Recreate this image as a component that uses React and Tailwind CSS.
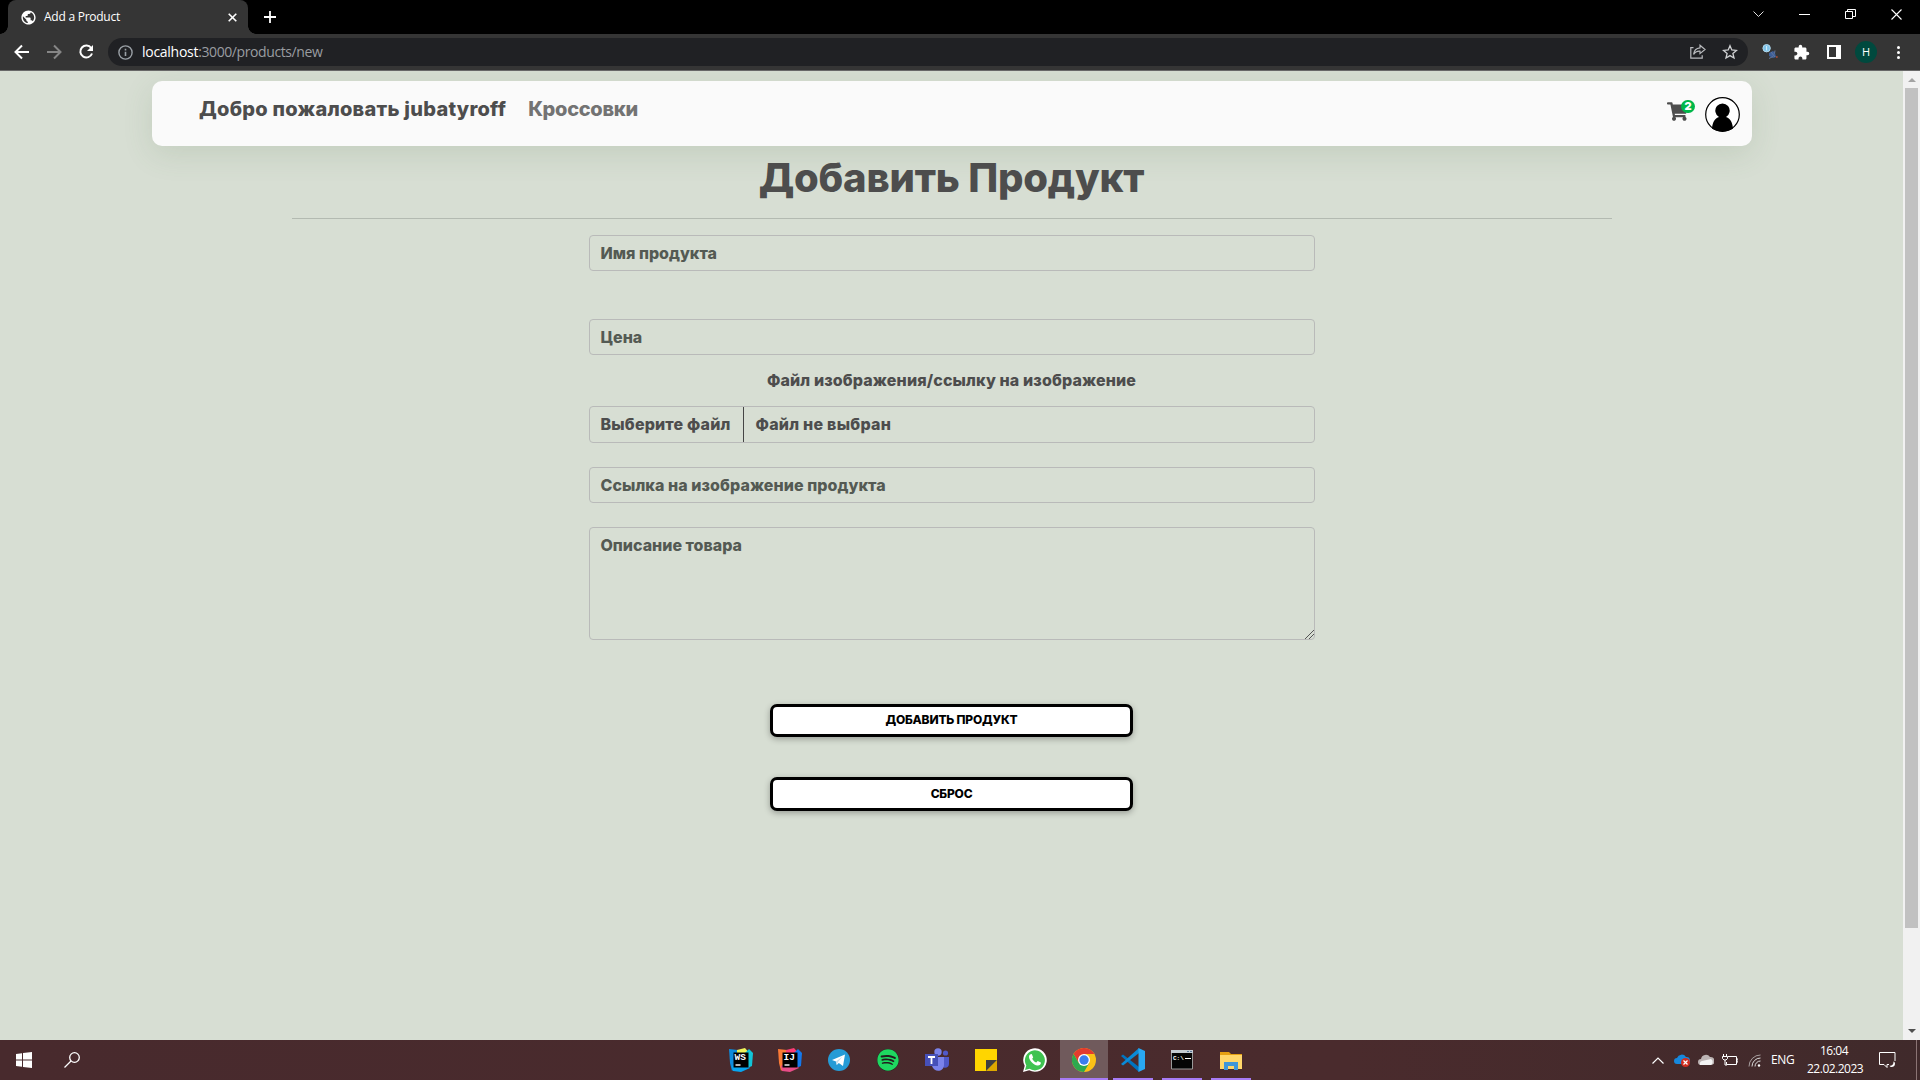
import React from 'react';
import { FaShoppingCart, FaSpotify } from 'react-icons/fa';
import { MdExtension, MdPublic } from 'react-icons/md';

function Tab() {
  return (
    <div className="relative ml-2 flex h-[34px] w-[240px] items-center rounded-t-lg bg-[#353535] pl-3">
      <span className="absolute -left-2 bottom-0 h-2 w-2 bg-[radial-gradient(circle_at_0_0,#000_7.5px,#353535_8px)]" />
      <span className="absolute -right-2 bottom-0 h-2 w-2 bg-[radial-gradient(circle_at_100%_0,#000_7.5px,#353535_8px)]" />
      <MdPublic className="h-[17px] w-[17px] text-white" />
      <span className="ml-[7px] text-[12px] tracking-[-0.25px] text-white">Add a Product</span>
      <svg className="absolute right-[11px] top-[13px] h-[9px] w-[9px]" viewBox="0 0 9 9" fill="none" stroke="#fff" strokeWidth="1.6">
        <path d="M.7.7l7.6 7.6M8.3.7L.7 8.3" />
      </svg>
    </div>
  );
}

function TitleBar() {
  return (
    <div className="flex h-[34px] justify-between bg-black">
      <div className="flex">
        <Tab />
        <svg className="ml-4 mt-[11px] h-3 w-3" viewBox="0 0 12 12" stroke="#fff" strokeWidth="1.8">
          <path d="M6 0v12M0 6h12" />
        </svg>
      </div>
      <div className="flex gap-[35px] pr-[18px] pt-[9px]">
        <svg className="h-[11px] w-[11px]" viewBox="0 0 11 11" fill="none" stroke="#ddd" strokeWidth="1">
          <path d="M.5 2.5l5 5 5-5" />
        </svg>
        <svg className="h-[11px] w-[11px]" viewBox="0 0 11 11" stroke="#fff">
          <path d="M0 5.500h11" />
        </svg>
        <svg className="h-[11px] w-[11px]" viewBox="0 0 11 11" fill="none" stroke="#fff">
          <path d="M.5 2.500h7v7h-7zM2.500 2.500v-2h8v7h-3" />
        </svg>
        <svg className="h-[11px] w-[11px]" viewBox="0 0 11 11" stroke="#fff" strokeWidth="1.1">
          <path d="M.5.5l10 10M10.500.5l-10 10" />
        </svg>
      </div>
    </div>
  );
}

function Toolbar() {
  return (
    <div className="flex h-[37px] items-center border-b border-[#686868] bg-[#353535]">
      <svg className="ml-[14px] h-4 w-4" viewBox="0 0 16 16" fill="none" stroke="#fff" strokeWidth="2">
        <path d="M15 8H2M8 1.5L1.5 8 8 14.5" />
      </svg>
      <svg className="ml-4 h-4 w-4" viewBox="0 0 16 16" fill="none" stroke="#868686" strokeWidth="2">
        <path d="M1 8h13M8 1.5L14.5 8 8 14.5" />
      </svg>
      <svg className="ml-4 h-4 w-4" viewBox="0 0 16 16" fill="none" stroke="#fff" strokeWidth="2">
        <path d="M13.2 4A6 6 0 1 0 14 9.5" />
        <path d="M15 1v6H9z" fill="#fff" stroke="none" />
      </svg>
      <div className="ml-[14px] flex h-7 w-[1640px] items-center rounded-full bg-[#202124] pl-[10px] pr-[10px]">
        <svg className="h-[15px] w-[15px]" viewBox="0 0 15 15" fill="none" stroke="#9aa0a6" strokeWidth="1.4">
          <circle cx="7.5" cy="7.5" r="6.6" />
          <path d="M7.5 6.7v4.3M7.5 3.8v1.6" strokeWidth="1.6" />
        </svg>
        <span className="ml-[9px] text-[14px] leading-5 tracking-[-0.4px] text-[#9a9da1]">
          <span className="tracking-[-0.28px] text-white">localhost</span>:3000/products/new
        </span>
        <svg className="ml-auto h-4 w-4" viewBox="0 0 16 16" fill="none" stroke="#b9bbbe" strokeWidth="1.2">
          <path d="M3.5 3.6H.8v10.6h11.4v-3M10 1.3L15 5.5 10 9.6V7.2C7 7 5 8 3.6 10.4 4 6.500 6.500 4.200 10 3.900z" />
        </svg>
        <svg className="ml-4 h-4 w-4" viewBox="0 0 16 16" fill="none" stroke="#d0d2d4" strokeWidth="1.3">
          <path d="M8 1.700l1.800 4.300 4.700.4-3.600 3 1.100 4.600L8 11.600 4 14l1.100-4.600-3.600-3 4.700-.4z" />
        </svg>
      </div>
      <svg className="ml-[14px] h-4 w-4" viewBox="0 0 16 16">
        <path d="M7 9l4-2 2 2 1 4-3 1-4-2z" fill="#3d5f99" />
        <path d="M7 14.500l4-2M13 6.500l-.5 3M9 8l4 5" stroke="#64779b" />
        <circle cx="4.600" cy="4.200" r="3.700" fill="#7fc4ea" stroke="#b4d9ec" />
        <path d="M4.600 2v4.500" stroke="#d8effa" />
        <circle cx="14.800" cy="13" r="1" fill="#a24b36" />
      </svg>
      <MdExtension className="ml-[15px] h-[17px] w-[17px] text-white" />
      <div className="ml-[17px] h-[14px] w-[14px] border-2 border-r-[5px] border-white" />
      <div className="ml-[14px] flex h-[22px] w-[22px] items-center justify-center rounded-full bg-[#00493e] text-[11px] text-white">H</div>
      <div className="ml-5 flex flex-col gap-[2px]">
        <i className="h-[3px] w-[3px] rounded-full bg-white" />
        <i className="h-[3px] w-[3px] rounded-full bg-white" />
        <i className="h-[3px] w-[3px] rounded-full bg-white" />
      </div>
    </div>
  );
}

function SiteNav() {
  return (
    <nav className="ml-[152px] mt-[10px] flex h-[65px] w-[1600px] rounded-[10px] bg-[#fafafa] pl-[47px] pr-3 shadow-[0_8px_30px_rgba(80,110,70,0.14)]">
      <span className="mt-[13px] whitespace-nowrap text-[20px] leading-[30px] tracking-[0.25px] text-[#4d4d4d]">Добро пожаловать jubatyroff</span>
      <span className="ml-[22px] mt-[13px] whitespace-nowrap text-[20px] leading-[30px] tracking-[-0.3px] text-[#737373]">Кроссовки</span>
      <div className="relative ml-auto mt-[21px] h-5 w-7">
        <FaShoppingCart className="h-[19px] w-[21px] text-[#4d4d4d]" />
        <span className="absolute -top-[2px] left-[14px] flex h-[13px] w-[14px] items-center justify-center rounded-full bg-[#00b74a] text-[11px] font-black leading-none text-white">2</span>
      </div>
      <svg className="ml-[10px] mt-4 h-[35px] w-[35px]" viewBox="0 0 35 35">
        <circle cx="17.500" cy="17.500" r="16.800" fill="#fff" stroke="#000" strokeWidth="1.2" />
        <path d="M7 31.500c.5-7 3.500-10.500 7-11.500a7.200 7.200 0 1 1 7 0c3.500 1 6.500 4.500 7 11.500-6 4-15 4-21 0z" />
      </svg>
    </nav>
  );
}

const field = 'flex w-[726px] rounded-[4px] border border-[#b9bab9] px-[11px] text-[16px] leading-[35px] text-[#545a53]';
const button = 'flex w-[363px] items-center justify-center rounded-[7px] border-[3px] border-black bg-white text-[12px] leading-none tracking-[-0.2px] text-black shadow-[0_2px_6px_rgba(0,0,0,0.3)]';

function ProductForm() {
  return (
    <main className="flex w-[1903px] flex-col items-center">
      <h1 className="mt-2 h-12 whitespace-nowrap text-[40px] leading-[48px] tracking-[-0.2px] text-[#4d4d4d]">Добавить Продукт</h1>
      <hr className="mt-4 w-[1320px] border-0 border-t border-[#b3bab1]" />
      <div className={field + ' mt-4 h-9'}><span>Имя продукта</span></div>
      <div className={field + ' mt-12 h-9'}><span>Цена</span></div>
      <p className="mt-[13px] h-6 text-[16px] leading-[25px] tracking-[0.13px] text-[#4d4d4d]">Файл изображения/ссылку на изображение</p>
      <div className={field + ' mt-[14px] h-[37px]'}>
        <span className="w-[143px] border-r border-[#454545] tracking-[0.17px] text-[#4d4d4d]">Выберите файл</span>
        <span className="ml-3 tracking-[0.25px] text-[#4d4d4d]">Файл не выбран</span>
      </div>
      <div className={field + ' mt-6 h-9'}><span className="leading-[34px] tracking-[0.06px]">Ссылка на изображение продукта</span></div>
      <div className={field + ' relative mt-6 h-[113px]'}>
        <span>Описание товара</span>
        <svg className="absolute bottom-0 right-0 h-[9px] w-[9px]" viewBox="0 0 9 9" stroke="#555">
          <path d="M0 9l9-9M4 9l5-5" />
        </svg>
      </div>
      <div className={button + ' mt-16 h-[33px] pb-px'}><span>ДОБАВИТЬ ПРОДУКТ</span></div>
      <div className={button + ' mt-10 h-[34px]'}><span>СБРОС</span></div>
    </main>
  );
}

function Scrollbar() {
  return (
    <div className="flex w-[17px] flex-col items-center bg-[#f1f1f1]">
      <i className="mt-[7px] h-0 w-0 border-x-4 border-b-4 border-x-transparent border-b-[#a3a3a3]" />
      <div className="mt-[6px] h-[840px] w-[13px] bg-[#c1c1c1]" />
      <i className="mb-[7px] mt-auto h-0 w-0 border-x-4 border-t-4 border-x-transparent border-t-[#505050]" />
    </div>
  );
}

function JetBrains({ label, colors }) {
  const [a, b, c, d] = colors;
  return (
    <svg className="h-6 w-6" viewBox="0 0 24 24">
      <path d="M0 1l9 1 4 11-10 10-2-8z" fill={a} />
      <path d="M8 2l8-2 5 6-8 9-5-4z" fill={b} />
      <path d="M14 7l6-6 4 4-1 13-9 4z" fill={c} />
      <path d="M3 18l9-6 9 8-9 4-8-1z" fill={d} />
      <path d="M4.500 4.500h15v15h-15z" />
      <text x="5.500" y="12" fontSize="9.500" fontWeight="700" fontFamily="Liberation Mono" fill="#fff">{label}</text>
      <path d="M6.500 17h5" stroke="#fff" strokeWidth="1.400" />
    </svg>
  );
}

function Telegram() {
  return (
    <svg className="h-[22px] w-[22px]" viewBox="0 0 22 22">
      <circle cx="11" cy="11" r="11" fill="#259bd6" />
      <path d="M4 11L17 5.500 15 17l-4.200-3-2 2-.8-3.500z" fill="#fff" />
      <path d="M8 12.500l6.500-5-4.700 5.800-1 2.700z" fill="#c4dcea" />
    </svg>
  );
}

function Spotify() {
  return (
    <div className="h-[22px] w-[22px] rounded-full bg-[#221d1e]">
      <FaSpotify className="h-[22px] w-[22px] text-[#1ed760]" />
    </div>
  );
}

function Teams() {
  return (
    <svg className="h-6 w-6" viewBox="0 0 24 24">
      <circle cx="20.500" cy="5" r="2.600" fill="#5059c9" />
      <path d="M16 9h8v7c0 4-5 5-7 2z" fill="#5059c9" />
      <circle cx="13" cy="4" r="3.700" fill="#7b83eb" />
      <path d="M7 9h12v8c0 7-10 8-12 1z" fill="#7b83eb" />
      <path d="M0 6h13v12H0z" fill="#4650b8" />
      <path d="M3 9h7M6.500 9v7" stroke="#fff" strokeWidth="1.800" />
    </svg>
  );
}

function StickyNotes() {
  return (
    <svg className="h-[22px] w-[22px]" viewBox="0 0 22 22">
      <path d="M0 0h22v22H0z" fill="#ffd500" />
      <path d="M11 22L22 11v11z" fill="#dda800" />
      <path d="M11 11h11L11 22z" fill="#3f3f3f" />
    </svg>
  );
}

function WhatsApp() {
  return (
    <svg className="h-6 w-6" viewBox="0 0 24 24">
      <path d="M0 24l1.700-6.200A11.800 11.800 0 1 1 6.200 22.300z" fill="#fff" />
      <path d="M2 22l1.300-4.500A10 10 0 1 1 6.500 20.800z" fill="#3fc351" />
      <path d="M7 6.500l1.800-.4 1.400 3.300-1 1.300c1 2 2.200 3 4.100 3.900l1.400-1.500 3.200 1.500c.2 2-1.600 3.200-3.400 3C10.500 17 6 12 6 9c0-1 .4-2 1-2.500z" fill="#fff" />
    </svg>
  );
}

function Chrome() {
  return (
    <svg className="h-6 w-6" viewBox="0 0 24 24">
      <circle cx="12" cy="12" r="12" fill="#fbc116" />
      <path d="M1.600 6A12 12 0 0 1 22.400 6H12l-5.200 9z" fill="#e33b2e" />
      <path d="M1.600 6A12 12 0 0 0 12 24l5.200-9H6.800z" fill="#2da94f" />
      <circle cx="12" cy="12" r="6" fill="#fff" />
      <circle cx="12" cy="12" r="4.700" fill="#3b7ded" />
    </svg>
  );
}

function VSCode() {
  return (
    <svg className="h-6 w-6" viewBox="0 0 24 24">
      <path d="M0 8l2-1.500L18 19v5z" fill="#0074c1" />
      <path d="M0 16l2 1.500L18 5V0z" fill="#0a8bd8" />
      <path d="M17.500 0L24 3v18l-6.500 3z" fill="#29a8f2" />
    </svg>
  );
}

function Terminal() {
  return (
    <svg className="h-5 w-[22px]" viewBox="0 0 22 20">
      <path d="M.5 1h21v18H.5z" fill="#050505" stroke="#999" />
      <path d="M0 0h22v3H0z" fill="#c4cbd0" />
      <path d="M16 1.500h2M19 1.500h2" stroke="#58779b" />
      <text x="2" y="9.500" fontSize="6" fontWeight="700" fontFamily="Liberation Mono" fill="#fff">C:\</text>
      <path d="M14 8.500h6" stroke="#fff" />
    </svg>
  );
}

function Explorer() {
  return (
    <svg className="h-[19px] w-[22px]" viewBox="0 0 22 19">
      <path d="M0 1h9l2 2h11v15H0z" fill="#e5a012" />
      <path d="M0 4h22v14H0z" fill="#ffd76a" />
      <path d="M4 11h14v8h-4v-4H8v4H4z" fill="#3f96d8" />
    </svg>
  );
}

const apps = [
  { icon: <JetBrains label="WS" colors={['#0e8bdc', '#eef35a', '#12c5d8', '#07a5ef']} /> },
  { icon: <JetBrains label="IJ" colors={['#fb7a36', '#fc3c75', '#1479ed', '#e84c87']} /> },
  { icon: <Telegram /> },
  { icon: <Spotify /> },
  { icon: <Teams /> },
  { icon: <StickyNotes /> },
  { icon: <WhatsApp /> },
  { icon: <Chrome />, active: true, open: true },
  { icon: <VSCode />, open: true },
  { icon: <Terminal />, open: true },
  { icon: <Explorer />, open: true },
];

function Tray() {
  return (
    <div className="ml-auto flex h-10 items-center">
      <svg className="h-[7px] w-3" viewBox="0 0 12 7" fill="none" stroke="#fff" strokeWidth="1.200">
        <path d="M.5 6.500L6 1l5.500 5.500" />
      </svg>
      <svg className="ml-[10px] h-[15px] w-4" viewBox="0 0 16 15">
        <path d="M3 11a3 3 0 0 1 0-6 5 5 0 0 1 9-1 3.500 3.500 0 0 1 1 7z" fill="#1688dd" />
        <circle cx="11.500" cy="9.500" r="4.500" fill="#d02e20" />
        <path d="M9.500 7.500l4 4M13.500 7.500l-4 4" stroke="#fff" strokeWidth="1.200" />
      </svg>
      <svg className="ml-2 h-3 w-4" viewBox="0 0 16 12">
        <path d="M3 11a3 3 0 0 1 0-6 5 5 0 0 1 9-2 4 4 0 0 1 1 8z" fill="#bcb4b4" />
        <path d="M2 11a3 3 0 0 1 2-4l9-2a3.500 3.500 0 0 1 0 6z" fill="#f3f3f3" />
      </svg>
      <svg className="ml-2 h-3 w-4" viewBox="0 0 16 12" fill="none" stroke="#fff">
        <path d="M6 2.500h8.500v8h-10V8M14.500 5H16v3h-1.500M1.500 0v2M4.500 0v2M.5 2.500h5v2L4 6H2L.5 4.500zM3 6v5h2" />
      </svg>
      <svg className="ml-[10px] h-[13px] w-[13px]" viewBox="0 0 13 13" fill="none" stroke="#ddd">
        <path d="M1 12.500A11.500 11.500 0 0 1 12.500 1" opacity=".65" />
        <path d="M4 12.500A8.500 8.500 0 0 1 12.500 4M7 12.500A5.500 5.500 0 0 1 12.500 7" />
        <circle cx="11" cy="11.500" r="1.200" fill="#fff" stroke="none" />
      </svg>
      <span className="ml-[10px] w-[23px] whitespace-nowrap text-[12px] tracking-[-0.3px] text-white">ENG</span>
      <div className="ml-[13px] w-[54px] whitespace-nowrap text-center text-[12px] leading-[18px] tracking-[-0.5px] text-white">
        <p>16:04</p>
        <p>22.02.2023</p>
      </div>
      <svg className="ml-[18px] h-4 w-[17px]" viewBox="0 0 17 16" fill="none" stroke="#fff">
        <path d="M16 9V.5H.5v12H5L8 15.500v-3h2" />
        <path d="M14.500 9.500c.3 3-1.800 4.500-4 4.200 1.200 2.200 5.500 1.300 5.500-2 0-1-.6-1.800-1.500-2.200z" fill="#fff" stroke="none" />
      </svg>
      <i className="ml-5 h-10 w-px bg-[#8b7474]" />
      <i className="h-10 w-[3px]" />
    </div>
  );
}

function Taskbar() {
  return (
    <footer className="flex h-10 items-center bg-[linear-gradient(90deg,#482a2d,#4a2b2d_70%,#402a2b)]">
      <svg className="ml-4 h-4 w-4" viewBox="0 0 16 16" fill="#fff">
        <path d="M0 2l6-.8v6.400H0zM7 1l9-1v7.600H7zM0 8.400h6v6.400L0 14zM7 8.400h9V16l-9-1z" />
      </svg>
      <svg className="ml-8 h-4 w-4" viewBox="0 0 16 16" fill="none" stroke="#fff" strokeWidth="1.300">
        <circle cx="10.500" cy="5.500" r="4.800" />
        <path d="M7 9L.5 15.500" />
      </svg>
      <div className="ml-[637px] flex gap-px">
        {apps.map((app, i) => (
          <div key={i} className={'relative flex h-10 w-12 items-center justify-center ' + (app.active ? 'bg-[#705a5c]' : '')}>
            {app.icon}
            {app.open && <i className={'absolute bottom-0 h-[2px] bg-[#a77bf5] ' + (app.active ? 'w-12' : 'w-10')} />}
          </div>
        ))}
      </div>
      <Tray />
    </footer>
  );
}

export default function App() {
  return (
    <div className="flex h-[1080px] w-[1920px] flex-col overflow-hidden bg-[#d7ded3] font-['Open_Sans','Noto_Sans',sans-serif]">
      <TitleBar />
      <Toolbar />
      <div className="flex h-[969px]">
        <div className="w-[1903px] overflow-hidden font-['Inter',sans-serif] font-extrabold">
          <SiteNav />
          <ProductForm />
        </div>
        <Scrollbar />
      </div>
      <Taskbar />
    </div>
  );
}
